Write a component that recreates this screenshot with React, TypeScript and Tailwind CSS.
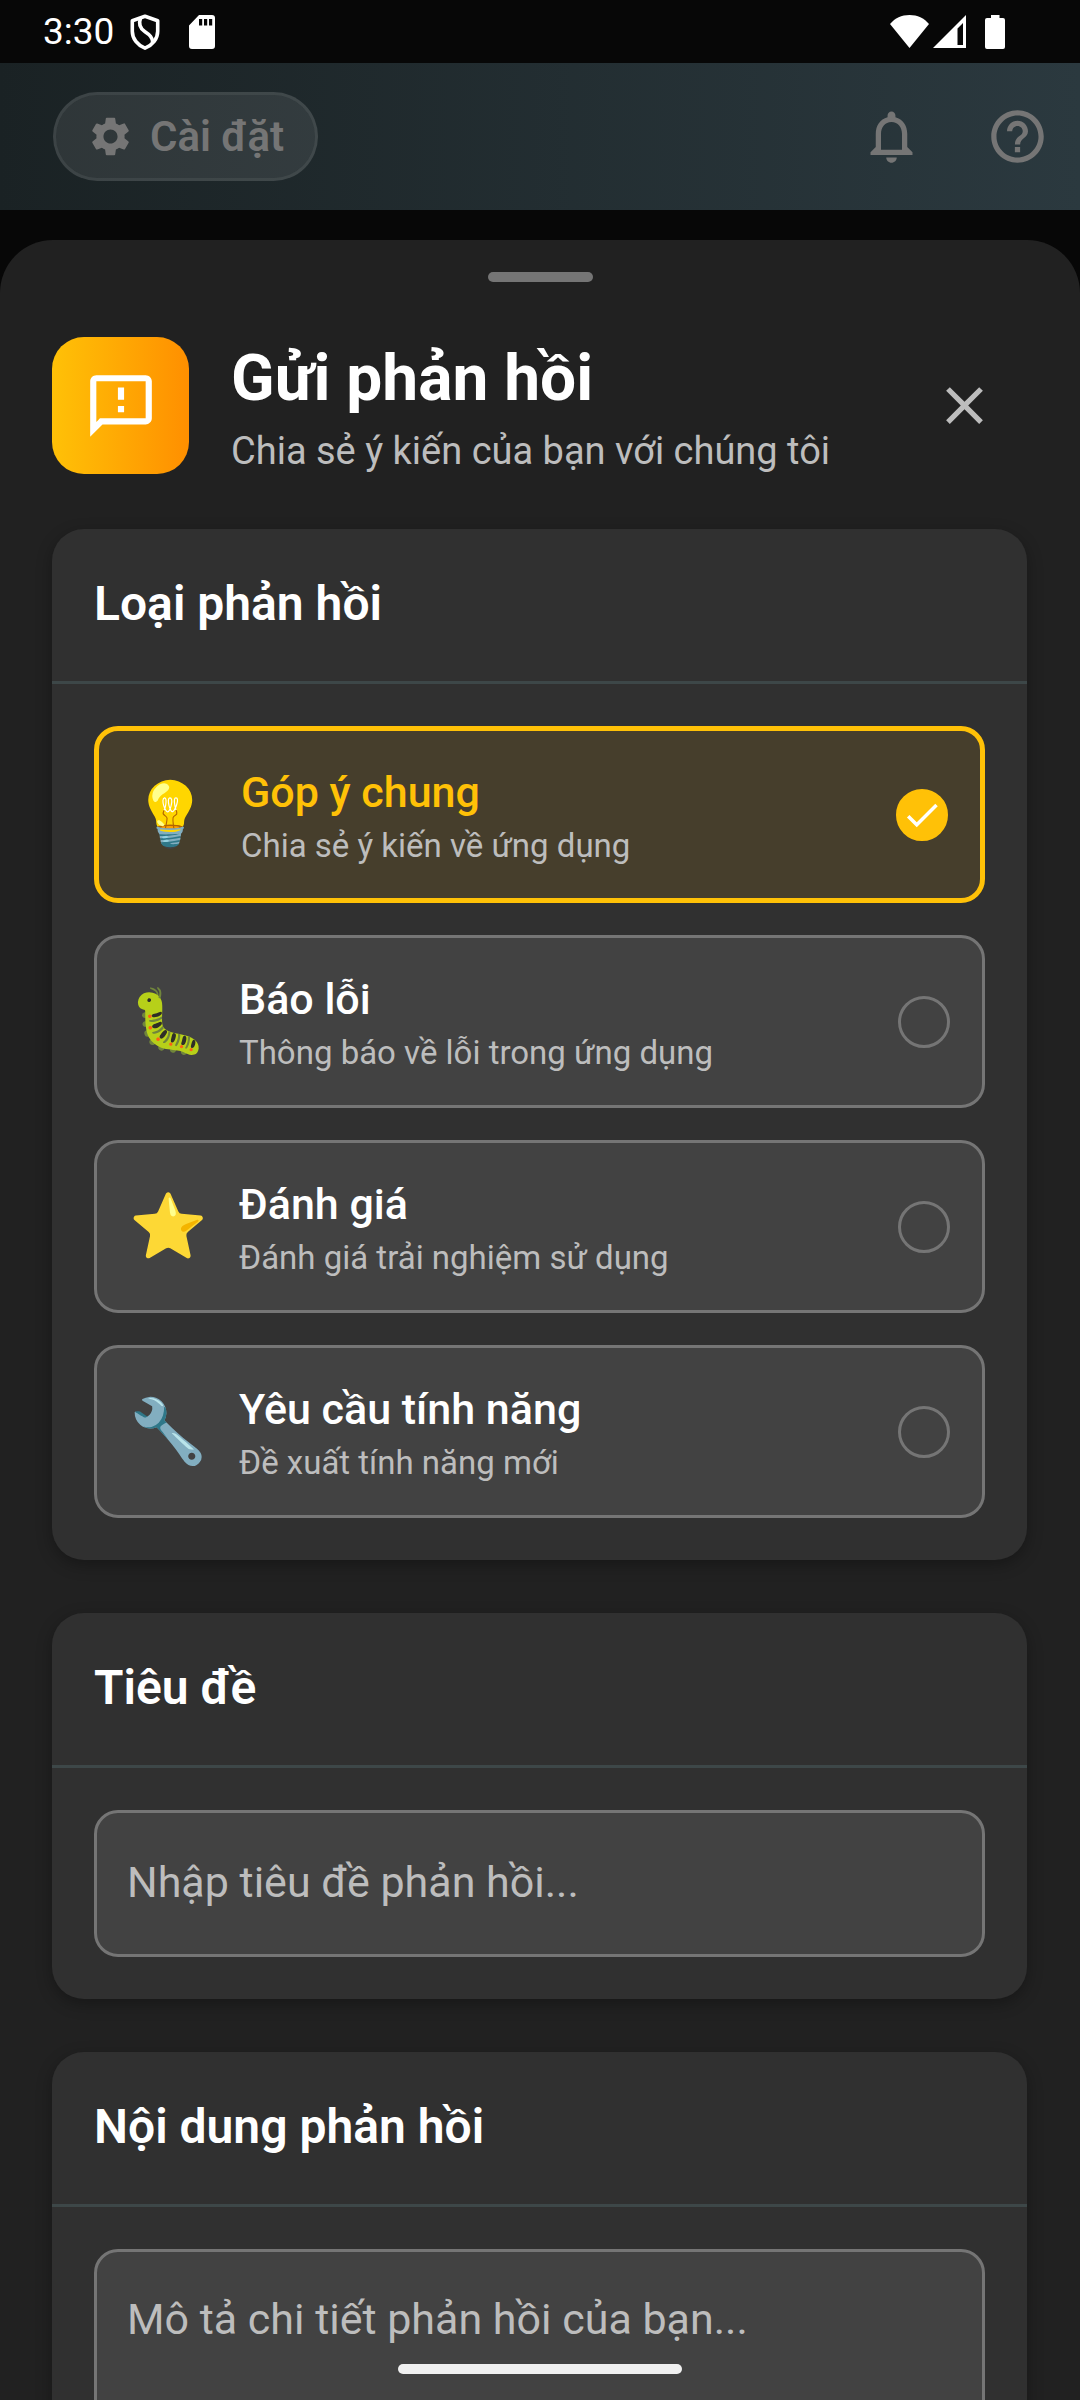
import { useState } from "react";
import {
  MdCheck,
  MdClose,
  MdHelpOutline,
  MdNotificationsNone,
  MdOutlineFeedback,
  MdSettings,
} from "react-icons/md";

type FeedbackType = {
  id: string;
  emoji: string;
  title: string;
  description: string;
};

const feedbackTypes: FeedbackType[] = [
  { id: "general", emoji: "💡", title: "Góp ý chung", description: "Chia sẻ ý kiến về ứng dụng" },
  { id: "bug", emoji: "🐛", title: "Báo lỗi", description: "Thông báo về lỗi trong ứng dụng" },
  { id: "rating", emoji: "⭐", title: "Đánh giá", description: "Đánh giá trải nghiệm sử dụng" },
  { id: "feature", emoji: "🔧", title: "Yêu cầu tính năng", description: "Đề xuất tính năng mới" },
];

function StatusBar() {
  return (
    <div className="flex h-[63px] shrink-0 items-center bg-[#070707] pr-[75px] pl-[43px] text-white">
      <span className="text-[37px] leading-none">3:30</span>
      <svg className="ml-4 h-9 w-[30px]" viewBox="0 0 30 36" fill="none" stroke="currentColor" strokeWidth="3.6" strokeLinejoin="round">
        <path d="M15 2.2 2.3 6.8v10.4c0 7.6 5.2 14 12.7 17 7.500-3 12.700-9.400 12.700-17V6.800z" />
        <path d="M10.500 4.200c-2.400 6.500-.6 10.300 4.500 13.600 5 3.300 7.200 5.400 7.600 10" />
      </svg>
      <svg className="ml-[29px] h-[34px] w-[26px]" viewBox="0 0 26 34" fill="currentColor">
        <path fillRule="evenodd" d="M10 0h13a3 3 0 0 1 3 3v28a3 3 0 0 1-3 3H3a3 3 0 0 1-3-3V10.500zM10 4v6.500h3.200V4zM15 4v6.500h3.200V4zM20 4v6.500h3.200V4z" />
      </svg>
      <svg className="ml-auto h-[33px] w-[39px]" viewBox="0 0 39 33" fill="currentColor">
        <path d="M19.500 33 0 9C5 3 11.500 0 19.500 0S34 3 39 9z" />
      </svg>
      <svg className="ml-1 h-[33px] w-[33px]" viewBox="0 0 33 33" fill="currentColor">
        <path fillRule="evenodd" d="M33 0v33H0zM30 8l-5.500 5.500V30H30z" />
      </svg>
      <svg className="ml-[19px] h-[34px] w-5" viewBox="0 0 20 34" fill="currentColor">
        <path d="M6 0h8.500v3H18a2 2 0 0 1 2 2v27a2 2 0 0 1-2 2H2a2 2 0 0 1-2-2V5a2 2 0 0 1 2-2h4z" />
      </svg>
    </div>
  );
}

function AppBar() {
  return (
    <header className="flex h-[147px] shrink-0 items-center bg-linear-to-r from-[#1a2224] to-[#2b393f] pl-[53px] text-[#757575]">
      <button className="flex h-[89px] items-center gap-4 rounded-full border-3 border-white/15 bg-white/9 bg-clip-padding px-[31px]">
        <MdSettings className="size-[47px]" aria-hidden />
        <span className="text-[42px] leading-[56px] font-semibold">Cài đặt</span>
      </button>
      <button className="ml-auto flex size-[126px] items-center justify-center" aria-label="Thông báo">
        <MdNotificationsNone className="size-[63px]" />
      </button>
      <button className="flex size-[126px] items-center justify-center" aria-label="Trợ giúp">
        <MdHelpOutline className="size-[63px]" />
      </button>
    </header>
  );
}

function Section({ title, titleId, children }: { title: string; titleId: string; children: React.ReactNode }) {
  return (
    <section className="rounded-[32px] bg-[#303030] shadow-[0_5px_16px_rgba(0,0,0,0.3)]">
      <h2 id={titleId} className="border-b-3 border-[#3d4748] px-[42px] pt-[41px] pb-[43px] text-[48px] leading-[68px] font-semibold text-white">
        {title}
      </h2>
      <div className="p-[42px]">{children}</div>
    </section>
  );
}

function TypeOption({ item, selected, onSelect }: { item: FeedbackType; selected: boolean; onSelect: () => void }) {
  return (
    <label
      className={
        selected
          ? "flex items-center gap-8 rounded-[24px] border-5 border-[#ffc107] bg-[#463e2c] p-8"
          : "flex items-center gap-8 rounded-[24px] border-3 border-[#757575] bg-[#424242] p-8"
      }
    >
      <span className="w-[78px] text-center text-[63px] leading-[80px]" aria-hidden>
        {item.emoji}
      </span>
      <span className="flex flex-1 flex-col gap-1">
        <span className={selected ? "text-[43px] leading-[58px] font-medium text-[#ffc107]" : "text-[43px] leading-[58px] font-medium text-white"}>
          {item.title}
        </span>
        <span className="text-[33px] leading-[41px] text-[#bdbdbd]">{item.description}</span>
      </span>
      <span className="relative flex size-[52px] items-center justify-center">
        <input
          type="radio"
          name="feedback-type"
          checked={selected}
          onChange={onSelect}
          className="size-[52px] appearance-none rounded-full border-3 border-[#757575] checked:border-[#ffc107] checked:bg-[#ffc107]"
        />
        {selected && <MdCheck className="pointer-events-none absolute size-[42px] text-white" aria-hidden />}
      </span>
    </label>
  );
}

export default function App() {
  const [selected, setSelected] = useState("general");

  return (
    <div className="relative flex h-screen flex-col overflow-hidden bg-[#070707] font-[Roboto,sans-serif]">
      <StatusBar />
      <AppBar />
      <main className="mt-[30px] flex min-h-0 flex-1 flex-col rounded-t-[53px] bg-[#212121]">
        <div className="mx-auto mt-8 h-[10px] w-[105px] shrink-0 rounded-full bg-[#757575]" />
        <div className="flex shrink-0 items-center pt-[55px] pr-[53px] pb-[40px] pl-[52px]">
          <div className="flex size-[137px] items-center justify-center rounded-[32px] bg-linear-to-r from-[#ffc107] to-[#ff8f00] text-white">
            <MdOutlineFeedback className="size-[74px]" aria-hidden />
          </div>
          <div className="ml-[42px] flex-1">
            <h1 className="text-[64px] leading-[82px] font-bold text-white">Gửi phản hồi</h1>
            <p className="mt-2 text-[38px] leading-[46px] text-[#bdbdbd]">Chia sẻ ý kiến của bạn với chúng tôi</p>
          </div>
          <button className="flex size-[126px] items-center justify-center text-[#bdbdbd]" aria-label="Đóng">
            <MdClose className="size-[63px]" />
          </button>
        </div>
        <form className="flex min-h-0 flex-1 flex-col gap-[53px] overflow-y-auto pt-[15px] pr-[53px] pl-[52px] [scrollbar-width:none]">
          <Section title="Loại phản hồi" titleId="type-title">
            <div role="radiogroup" aria-labelledby="type-title" className="flex flex-col gap-8">
              {feedbackTypes.map((item) => (
                <TypeOption key={item.id} item={item} selected={item.id === selected} onSelect={() => setSelected(item.id)} />
              ))}
            </div>
          </Section>
          <Section title="Tiêu đề" titleId="subject-title">
            <input
              type="text"
              aria-labelledby="subject-title"
              placeholder="Nhập tiêu đề phản hồi..."
              className="block h-[147px] w-full rounded-[24px] border-3 border-[#757575] bg-[#424242] px-[30px] pb-1 text-[43px] text-white placeholder:text-[#bdbdbd]"
            />
          </Section>
          <Section title="Nội dung phản hồi" titleId="content-title">
            <textarea
              aria-labelledby="content-title"
              rows={5}
              placeholder="Mô tả chi tiết phản hồi của bạn..."
              className="block w-full resize-none rounded-[24px] border-3 border-[#757575] bg-[#424242] px-[30px] py-9 text-[43px] leading-[63px] text-white placeholder:text-[#bdbdbd]"
            />
          </Section>
        </form>
      </main>
      <div className="absolute bottom-[26px] left-1/2 h-[10px] w-[284px] -translate-x-1/2 rounded-full bg-[#f0f0f0]" />
    </div>
  );
}
